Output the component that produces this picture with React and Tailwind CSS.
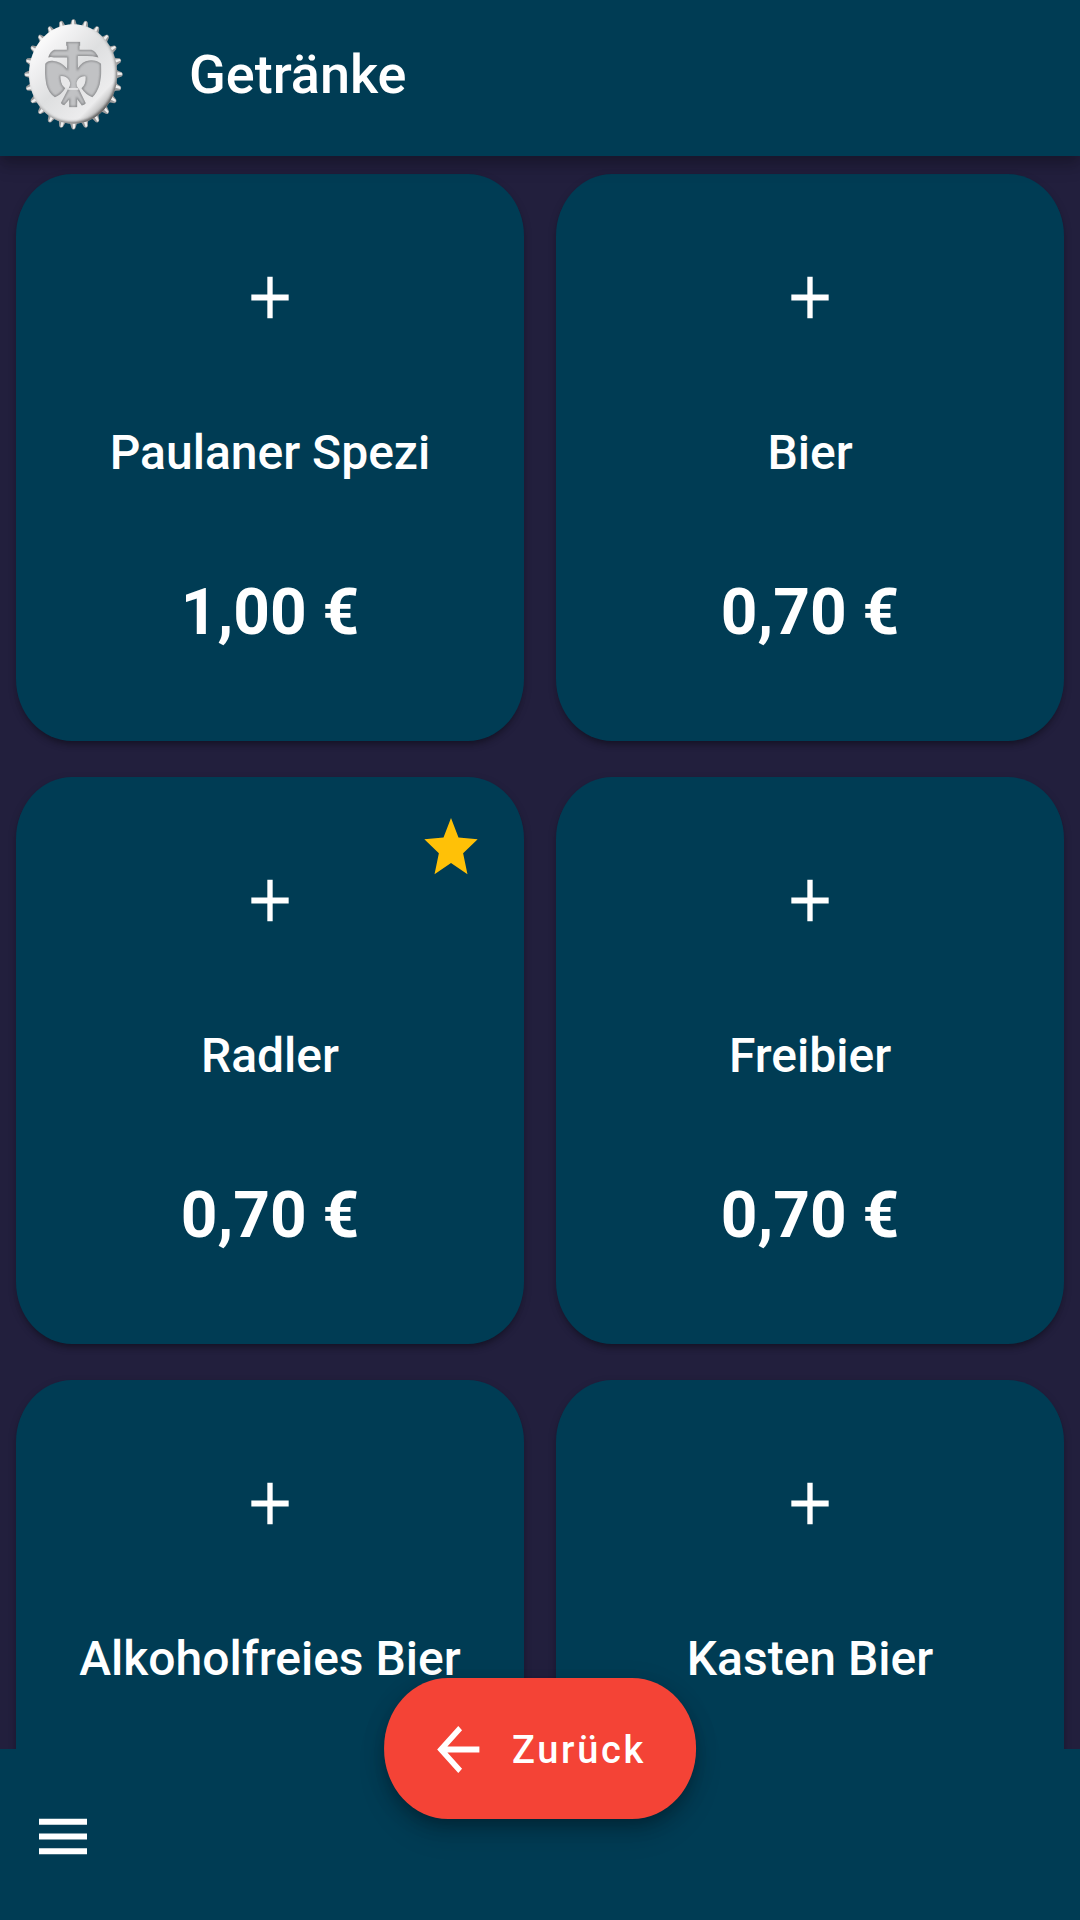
const ICONS = {
  plus: 'M19,13H13V19H11V13H5V11H11V5H13V11H19V13Z',
  star: 'M12,17.27L18.18,21L16.54,13.97L22,9.24L14.81,8.62L12,2L9.19,8.62L2,9.24L7.45,13.97L5.82,21L12,17.27Z',
  arrowLeft:
    'M20,11V13H8L13.5,18.5L12.08,19.92L4.16,12L12.08,4.08L13.5,5.5L8,11H20Z',
  menu: 'M3,6H21V8H3V6M3,11H21V13H3V11M3,16H21V18H3V16Z',
};

const DRINKS = [
  { name: 'Paulaner Spezi', price: '1,00 €' },
  { name: 'Bier', price: '0,70 €' },
  { name: 'Radler', price: '0,70 €', favourite: true },
  { name: 'Freibier', price: '0,70 €' },
  { name: 'Alkoholfreies Bier' },
  { name: 'Kasten Bier' },
];

const TEETH = Array.from({ length: 24 }, (_, i) => {
  const a = (i * Math.PI) / 12;
  const at = (r, d) =>
    `${(221 + 148 * r * Math.sin(a + d)).toFixed(1)},${(222 - 166 * r * Math.cos(a + d)).toFixed(1)}`;
  return {
    outer: `M${at(0.86, -0.11)}L${at(0.91, -0.07)}L${at(0.98, -0.04)}L${at(1, -0.015)}L${at(1, 0.015)}L${at(0.98, 0.04)}L${at(0.91, 0.07)}L${at(0.86, 0.11)}Z`,
    light: `M${at(0.86, -0.05)}L${at(0.98, -0.028)}L${at(0.99, 0.01)}L${at(0.86, 0.022)}Z`,
  };
});

function Icon({ name, className = '' }) {
  return (
    <svg
      viewBox="0 0 24 24"
      preserveAspectRatio="none"
      className={`h-[71px] w-16 shrink-0 fill-current ${className}`}
      aria-hidden="true"
    >
      <path d={ICONS[name]} />
    </svg>
  );
}

function CapLogo() {
  const eagle =
    'M199,124H241V136H239V148H275Q288,152 296,171Q278,167 262,167H234V204Q247,182 268,180Q290,178 304,190Q307,222 300,252Q292,278 278,291Q258,284 245,264Q259,253 257,230Q243,226 235,240Q230,251 235,262L258,309Q254,315 246,316L232,296V321H208V298L193,315Q186,313 183,308L207,262Q211,248 205,238Q197,227 182,228Q182,254 196,264Q184,284 165,291Q146,279 139,252Q133,222 136,190Q143,180 158,181Q184,183 202,205V171H162Q153,169 145,171Q149,155 163,148H201V136H199Z';
  return (
    <svg viewBox="72 56 298 333" className="h-[111px] w-[99px] shrink-0" role="img" aria-label="Logo">
      <defs>
        <linearGradient id="face" x1="0.1" y1="0.1" x2="0.85" y2="0.9">
          <stop offset="0" stopColor="#fff" />
          <stop offset="0.18" stopColor="#f3f3f4" />
          <stop offset="0.5" stopColor="#dedfe0" />
          <stop offset="0.85" stopColor="#ececed" />
          <stop offset="1" stopColor="#a5a5a5" />
        </linearGradient>
        <linearGradient id="rim" x1="0.1" y1="0.1" x2="0.85" y2="0.9">
          <stop offset="0.2" stopColor="#e4e4e4" />
          <stop offset="0.6" stopColor="#8a8a8a" />
          <stop offset="1" stopColor="#3c3c3c" />
        </linearGradient>
        <filter id="soft" x="-10%" y="-10%" width="120%" height="120%">
          <feGaussianBlur stdDeviation="5" />
        </filter>
        <filter id="softer" x="-10%" y="-10%" width="120%" height="120%">
          <feGaussianBlur stdDeviation="3" />
        </filter>
        <clipPath id="cap">
          <ellipse cx="220" cy="221" rx="133" ry="150" />
        </clipPath>
        <clipPath id="eagle">
          <path d={eagle} />
        </clipPath>
      </defs>
      {TEETH.map((t) => (
        <g key={t.outer}>
          <path d={t.outer} fill="#9a9b9c" />
          <path d={t.light} fill="#efefef" />
        </g>
      ))}
      <ellipse cx="220" cy="221" rx="133" ry="150" fill="url(#face)" />
      <g clipPath="url(#cap)">
        <ellipse cx="217" cy="217" rx="137" ry="154" fill="none" stroke="url(#rim)" strokeWidth="9" filter="url(#soft)" />
      </g>
      <path d={eagle} fill="#c1c2c4" />
      <g clipPath="url(#eagle)">
        <path d={eagle} fill="none" stroke="#77787a" strokeWidth="5" filter="url(#softer)" />
      </g>
      <path
        d="M182,228Q204,225 211,248Q211,257 206,264Q182,262 182,228ZM257,228Q235,227 230,248Q230,257 235,264Q258,260 257,228Z"
        fill="#e8e8e9"
      />
      <path d="M205,266H236" stroke="#e8e8e9" strokeWidth="5" fill="none" />
    </svg>
  );
}

function DrinkCard({ name, price, favourite }) {
  return (
    <button
      type="button"
      className="relative flex min-h-[567px] flex-col items-center gap-[88px] rounded-[56px/62px] bg-[#003c54] py-[88px] shadow-[0_6px_6px_-4px_rgba(0,0,0,0.3),0_3px_8px_0_rgba(0,0,0,0.2)]"
    >
      <Icon name="plus" />
      <span className="text-[48px] leading-[64px] font-medium">{name}</span>
      {price && <span className="text-[64px] leading-[80px] font-bold">{price}</span>}
      {favourite && <Icon name="star" className="absolute top-[35px] right-[41px] text-[#ffc107]" />}
    </button>
  );
}

export default function App() {
  return (
    <div className="flex h-screen flex-col overflow-hidden bg-[#221f3d] font-['Roboto',sans-serif] text-white">
      <header className="relative z-10 flex items-center gap-[66px] bg-[#003c54] px-6 pt-[19px] pb-[26px] shadow-[0_6px_12px_0_rgba(0,0,0,0.2),0_12px_16px_0_rgba(0,0,0,0.1)]">
        <CapLogo />
        <h1 className="text-[54px] leading-[64px] font-medium">Getränke</h1>
      </header>

      <main className="grid min-h-0 flex-1 grid-cols-2 content-start gap-x-8 gap-y-9 overflow-hidden px-4 pt-[18px]">
        {DRINKS.map((drink) => (
          <DrinkCard key={drink.name} {...drink} />
        ))}
      </main>

      <footer className="relative z-10 bg-[#003c54] px-[31px] pt-[52px] pb-12">
        <button type="button" aria-label="Menü" className="block">
          <Icon name="menu" />
        </button>
        <button
          type="button"
          className="absolute -top-[71px] left-1/2 flex -translate-x-1/2 items-center gap-[22px] rounded-[64px/70px] bg-[#f44336] pt-9 pr-[50px] pb-[34px] pl-[42px] shadow-[0_8px_14px_-3px_rgba(0,0,0,0.2),0_16px_28px_0_rgba(0,0,0,0.14),0_3px_24px_0_rgba(0,0,0,0.1)]"
        >
          <Icon name="arrowLeft" />
          <span className="text-[38px] leading-[48px] font-medium tracking-[0.07em]">Zurück</span>
        </button>
      </footer>
    </div>
  );
}
